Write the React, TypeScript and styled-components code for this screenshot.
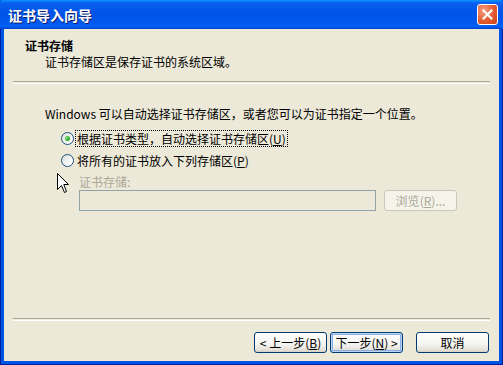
import React from "react";
import styled, { createGlobalStyle } from "styled-components";

const GlobalStyle = createGlobalStyle`
  html, body { margin: 0; padding: 0; }
  body {
    width: 503px; height: 365px; overflow: hidden; background: #0054e3;
    font-family: "Noto Sans CJK SC", "Liberation Sans", sans-serif;
  }
`;

const Window = styled.div`
  width: 503px; height: 365px;
  display: flex; flex-direction: column;
  box-sizing: border-box;
`;

const TitleBar = styled.div`
  height: 29px; flex: none;
  display: flex; align-items: center; justify-content: space-between;
  padding: 0 5px 0 8px;
  background: linear-gradient(180deg, #0997ff 0%, #0a5fef 10%, #0054e8 45%, #0058ee 80%, #0062fa 90%, #0043d2 100%);
  border-radius: 3px 3px 0 0;
`;

const TitleText = styled.span`
  color: #ffffff; font-size: 14px; font-weight: 700; line-height: 16px;
  text-shadow: 1px 1px 0 #0a1e6e;
`;

const CloseButton = styled.div`
  width: 21px; height: 21px; box-sizing: border-box;
  border: 1px solid #ffffff; border-radius: 3px;
  background: radial-gradient(circle at 30% 30%, #f4a083 0%, #e45b2f 55%, #c8401a 100%);
  display: flex; align-items: center; justify-content: center;
`;

const Frame = styled.div`
  flex: 1; display: flex; flex-direction: column;
  padding: 0 3px 3px;
  background: #0054e3;
  border: 1px solid #001ea0; border-top: none;
`;

const Body = styled.div`
  flex: 1; position: relative;
  display: flex; flex-direction: column;
  background: #ece9d8;
  font-size: 12px; line-height: 16px; color: #000000;
`;

const Header = styled.div`
  padding: 9px 0 0 21px;
`;

const HeaderTitle = styled.div`
  font-weight: 700;
`;

const HeaderSub = styled.div`
  padding-left: 20px;
`;

const Separator = styled.div<{ $top: number }>`
  height: 1px; margin: ${p => p.$top}px 9px 0;
  border-top: 1px solid #aca899; border-bottom: 1px solid #ffffff;
`;

const Main = styled.div`
  padding: 22px 0 0 41px;
  display: flex; flex-direction: column;
`;

const RadioGroup = styled.div`
  padding: 5px 0 0 16px;
  display: flex; flex-direction: column;
`;

const RadioRow = styled.div`
  height: 22px; display: flex; align-items: center; gap: 2px;
`;

const RadioCircle = styled.span<{ $checked?: boolean }>`
  width: 13px; height: 13px; box-sizing: border-box; flex: none;
  border: 1px solid #1c5180; border-radius: 50%;
  background: linear-gradient(135deg, #dcdcd7 0%, #ffffff 80%);
  display: flex; align-items: center; justify-content: center;
  &::after {
    content: ""; width: 5px; height: 5px; border-radius: 50%;
    background: radial-gradient(circle at 35% 35%, #7be27a 0%, #21a121 70%);
    display: ${p => (p.$checked ? "block" : "none")};
  }
`;

const RadioLabel = styled.span<{ $focused?: boolean }>`
  padding: 0 1px;
  outline: ${p => (p.$focused ? "1px dotted #000000" : "none")};
  outline-offset: 0px;
  line-height: 15px;
`;

const StoreSection = styled.div`
  padding: 3px 0 0 34px;
  display: flex; flex-direction: column;
`;

const DisabledLabel = styled.div`
  color: #aca899;
`;

const StoreRow = styled.div`
  display: flex; align-items: center; gap: 8px;
`;

const TextBox = styled.div`
  width: 297px; height: 21px; box-sizing: border-box;
  border: 1px solid #8ea4a8; background: #ece9d8;
`;

const Footer = styled.div`
  margin-top: auto;
  display: flex; flex-direction: column;
`;

const ButtonRow = styled.div`
  display: flex; justify-content: flex-end; align-items: center;
  padding: 11px 10px 8px 0;
`;

const NavGroup = styled.div`
  display: flex; gap: 3px; margin-right: 13px;
`;

const Button = styled.div<{ $default?: boolean; $disabled?: boolean }>`
  width: 73px; height: 21px; box-sizing: border-box;
  display: flex; align-items: center; justify-content: center;
  border: 1px solid ${p => (p.$disabled ? "#c9c7ba" : "#003c74")};
  border-radius: 3px;
  background: ${p =>
    p.$disabled
      ? "#f5f4ea"
      : "linear-gradient(180deg, #ffffff 0%, #f4f4f0 60%, #e3e0d6 90%, #d6d0c5 100%)"};
  color: ${p => (p.$disabled ? "#aca899" : "#000000")};
  box-shadow: ${p =>
    p.$default ? "inset 0 0 0 1px #bcd4f6, inset 0 0 0 2px #89ade4" : "none"};
  font-size: 12px; line-height: 14px; white-space: nowrap;
`;

const Cursor = styled.svg`
  position: absolute; left: 53px; top: 144px;
`;

const Mn: React.FC<{ k: string }> = ({ k }) => (
  <>(<u>{k}</u>)</>
);

export default function App() {
  return (
    <Window>
      <GlobalStyle />
      <TitleBar>
        <TitleText>证书导入向导</TitleText>
        <CloseButton>
          <svg width="11" height="11" viewBox="0 0 11 11">
            <path d="M1.5 1.5 L9.5 9.5 M9.5 1.5 L1.5 9.5" stroke="#ffffff" strokeWidth="2" strokeLinecap="square" />
          </svg>
        </CloseButton>
      </TitleBar>
      <Frame>
        <Body>
          <Header>
            <HeaderTitle>证书存储</HeaderTitle>
            <HeaderSub>证书存储区是保存证书的系统区域。</HeaderSub>
          </Header>
          <Separator $top={11} />
          <Main>
            <div>Windows 可以自动选择证书存储区，或者您可以为证书指定一个位置。</div>
            <RadioGroup>
              <RadioRow>
                <RadioCircle $checked />
                <RadioLabel $focused>根据证书类型，自动选择证书存储区<Mn k="U" /></RadioLabel>
              </RadioRow>
              <RadioRow>
                <RadioCircle />
                <RadioLabel>将所有的证书放入下列存储区<Mn k="P" /></RadioLabel>
              </RadioRow>
            </RadioGroup>
            <StoreSection>
              <DisabledLabel>证书存储:</DisabledLabel>
              <StoreRow>
                <TextBox />
                <Button $disabled>浏览<Mn k="R" />...</Button>
              </StoreRow>
            </StoreSection>
          </Main>
          <Footer>
            <Separator $top={0} />
            <ButtonRow>
              <NavGroup>
                <Button>&lt; 上一步<Mn k="B" /></Button>
                <Button $default>下一步<Mn k="N" /> &gt;</Button>
              </NavGroup>
              <Button>取消</Button>
            </ButtonRow>
          </Footer>
          <Cursor width="13" height="21" viewBox="0 0 13 21">
            <path d="M0.5 0.5 L0.5 16.5 L4.5 12.5 L7.5 19.5 L9.5 18.5 L6.8 11.5 L11.5 11.5 Z" fill="#ffffff" stroke="#000000" strokeWidth="1" />
          </Cursor>
        </Body>
      </Frame>
    </Window>
  );
}
